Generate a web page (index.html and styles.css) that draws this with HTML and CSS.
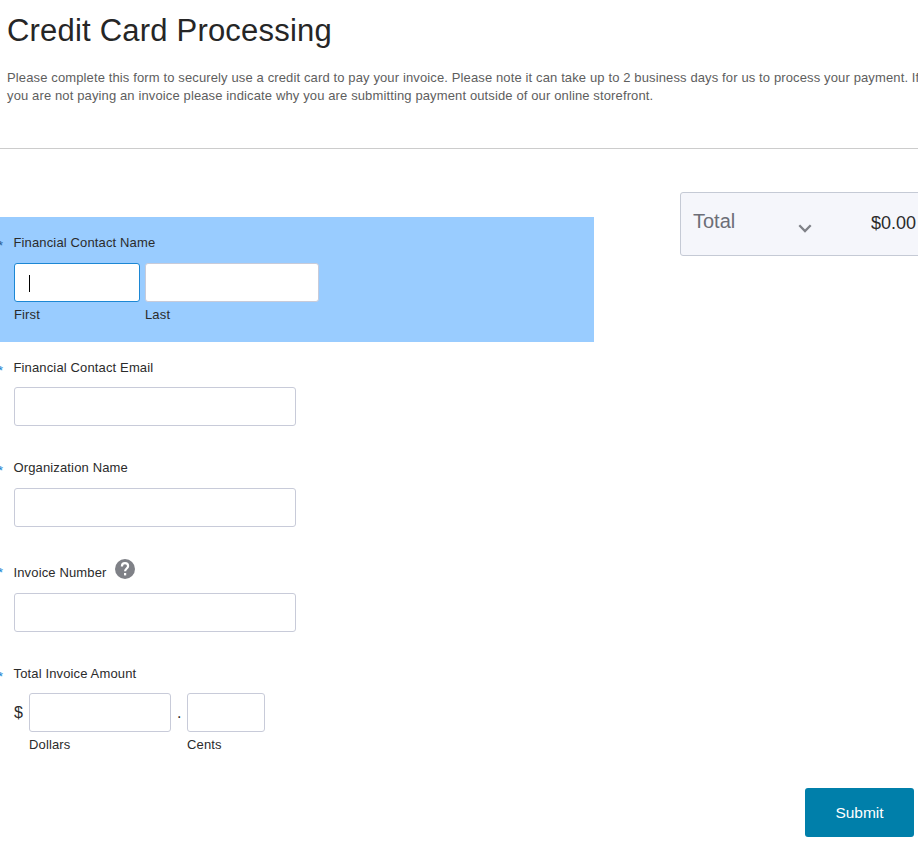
FILE: index.html
```
<!DOCTYPE html>
<html lang="en">
<head>
    <meta charset="UTF-8">
    <meta name="viewport" content="width=device-width, initial-scale=1.0">
    <title>Credit Card Processing</title>
    <link rel="stylesheet" href="styles.css">
</head>
<body>
<header class="header">
    <h1>Credit Card Processing</h1>
    <p>Please complete this form to securely use a credit card to pay your invoice. Please note it can take up to 2 business days for us to process your payment. If<br>you are not paying an invoice please indicate why you are submitting payment outside of our online storefront.</p>
</header>

<form class="form">
    <div class="columns">
        <div class="fields">
            <div class="field name active">
                <div class="label required"><label for="first">Financial Contact Name</label></div>
                <div class="group">
                    <div class="part first">
                        <div class="input focused" id="first"><span class="caret"></span></div>
                        <span class="hint">First</span>
                    </div>
                    <div class="part last">
                        <input class="input" type="text" id="last">
                        <label class="hint" for="last">Last</label>
                    </div>
                </div>
            </div>

            <div class="field email">
                <div class="label required"><label for="email">Financial Contact Email</label></div>
                <input class="input" type="text" id="email">
            </div>

            <div class="field organization">
                <div class="label required"><label for="organization">Organization Name</label></div>
                <input class="input" type="text" id="organization">
            </div>

            <div class="field invoice">
                <div class="label required">
                    <label for="invoice">Invoice Number</label>
                    <svg class="help" viewBox="0 0 20 20">
                        <circle cx="10" cy="10" r="10"/>
                        <path d="M6.9 7.4C6.9 5.4 8.2 4.1 10 4.1s3.1 1.2 3.1 3c0 2.4-3 2.5-3 5.2"/>
                        <path d="M10.1 14v2.4"/>
                    </svg>
                </div>
                <input class="input" type="text" id="invoice">
            </div>

            <div class="field amount">
                <div class="label required"><label for="dollars">Total Invoice Amount</label></div>
                <div class="group">
                    <span class="symbol">$</span>
                    <div class="part dollars">
                        <input class="input" type="text" id="dollars">
                        <label class="hint" for="dollars">Dollars</label>
                    </div>
                    <span class="symbol dot">.</span>
                    <div class="part cents">
                        <input class="input" type="text" id="cents">
                        <label class="hint" for="cents">Cents</label>
                    </div>
                </div>
            </div>
        </div>

        <aside class="total">
            <span class="total-label">Total</span>
            <svg class="chevron" viewBox="0 0 14 9">
                <path d="M1.3 1.3L7 7l5.7-5.7"/>
            </svg>
            <span class="total-value">$0.00</span>
        </aside>
    </div>

    <div class="footer">
        <button class="submit" type="button">Submit</button>
    </div>
</form>
</body>
</html>
```
FILE: styles.css
```
* {
    box-sizing: border-box;
}

body {
    margin: 0;
    height: 851px;
    overflow: hidden;
    background-color: #ffffff;
    color: #2b2b2b;
    font-family: "Liberation Sans", Arial, sans-serif;
    font-size: 13px;
    letter-spacing: 0.14px;
}

.header {
    height: 149px;
    padding: 12px 0 0 7px;
    border-bottom: 1px solid #cccccc;
}

h1 {
    margin: 0 0 19px;
    font-size: 31px;
    line-height: 38px;
    font-weight: normal;
    letter-spacing: 0.2px;
    color: #262626;
}

.header p {
    margin: 0;
    line-height: 18px;
    letter-spacing: 0.127px;
    color: #5e5e5e;
    white-space: nowrap;
}

.columns {
    display: flex;
    align-items: flex-start;
    gap: 86px;
    height: 639px;
}

.fields {
    width: 594px;
    flex-shrink: 0;
    padding-top: 68px;
}

.field {
    padding: 17px 0 0 14px;
}

.active {
    background-color: #99ccff;
}

.name {
    height: 125px;
}

.email {
    height: 100px;
}

.organization {
    height: 101px;
}

.invoice {
    height: 105px;
    padding-top: 21px;
}

.amount {
    height: 125px;
    padding-top: 17px;
}

.label {
    display: flex;
    height: 29px;
    line-height: 18px;
}

.email .label,
.amount .label {
    height: 28px;
}

/* the star hangs in the left gutter, cut by the page edge */
.required::before {
    content: "*";
    width: 15.5px;
    margin-left: -16px;
    padding-top: 3px;
    color: #1c87d4;
}

.active .required::before {
    color: #2b5f96;
}

.invoice .required::before {
    padding-top: 0;
}

.input {
    display: block;
    width: 282px;
    height: 39px;
    padding: 0 14px;
    border: 1px solid #c8cbd9;
    border-radius: 3px;
    background-color: #ffffff;
}

.focused {
    display: flex;
    align-items: center;
    border-color: #1c87d4;
}

.caret {
    width: 1px;
    height: 17px;
    margin-top: 2px;
    background-color: #000000;
}

.group {
    display: flex;
}

.part .input {
    width: 100%;
}

.hint {
    display: block;
    margin-top: 4px;
    line-height: 18px;
}

.first {
    width: 126px;
    margin-right: 5px;
}

.last {
    width: 174px;
}

.help {
    width: 20px;
    height: 20px;
    margin: -5px 0 0 8px;
    fill: #7f8187;
}

.help path {
    fill: none;
    stroke: #ffffff;
    stroke-width: 2.2;
}

.symbol {
    width: 15px;
    font-size: 16px;
    line-height: 39px;
}

.dollars {
    width: 142px;
}

.dot {
    width: 16px;
    padding-left: 6px;
}

.cents {
    width: 78px;
}

.total {
    display: flex;
    flex-shrink: 0;
    width: 252px;
    height: 64px;
    margin-top: 43px;
    padding-left: 12px;
    border: 1px solid #c5cad5;
    border-radius: 3px;
    background-color: #f5f6fb;
    letter-spacing: 0;
}

.total-label {
    width: 105px;
    font-size: 20px;
    line-height: 56px;
    color: #6c6e77;
}

.chevron {
    width: 14px;
    height: 9px;
    margin-top: 31px;
    fill: none;
    stroke: #7f8187;
    stroke-width: 2.3;
}

.total-value {
    margin-left: 59px;
    font-size: 18px;
    line-height: 60px;
}

.footer {
    display: flex;
    justify-content: flex-end;
    padding-right: 4px;
}

.submit {
    width: 109px;
    height: 49px;
    padding-top: 2px;
    border: none;
    border-radius: 3px;
    background-color: #007faa;
    color: #ffffff;
    font-family: inherit;
    font-size: 15.5px;
}
```
